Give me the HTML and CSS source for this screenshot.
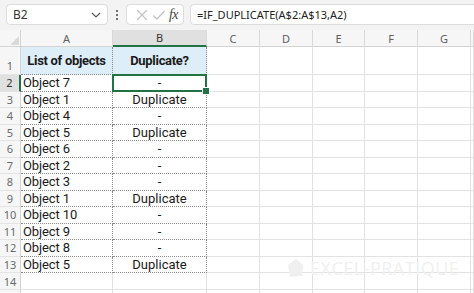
FILE: index.html
```html
<!DOCTYPE html>
<html>
<head>
<meta charset="utf-8">
<link rel="stylesheet" href="styles.css">
</head>
<body>
<div class="app">
  <div class="fbar">
    <div class="namebox"><span class="nb-text">B2</span>
      <svg class="chev" width="10" height="6" viewBox="0 0 10 6"><path d="M1 1 L5 5 L9 1" fill="none" stroke="#555" stroke-width="1.2"/></svg>
    </div>
    <div class="vdots"><span></span><span></span><span></span></div>
    <div class="actions">
      <svg width="14" height="14" viewBox="0 0 14 14"><path d="M2 2 L12 12 M12 2 L2 12" stroke="#c4c4c4" stroke-width="1.3" fill="none"/></svg>
      <svg width="14" height="14" viewBox="0 0 14 14"><path d="M1.5 7.5 L5 11 L12.5 3" stroke="#c4c4c4" stroke-width="1.3" fill="none"/></svg>
      <span class="fx">fx</span>
    </div>
    <div class="formula">=IF_DUPLICATE(A$2:A$13,A2)</div>
  </div>
  <div class="sheet">
    <div class="corner"><span class="tri"></span></div>
    <div class="ch">A</div><div class="ch sel">B</div><div class="ch">C</div><div class="ch">D</div><div class="ch">E</div><div class="ch">F</div><div class="ch">G</div><div class="ch"></div>

    <div class="rh rh1">1</div><div class="c hd">List of objects</div><div class="c hd">Duplicate?</div><div class="e"></div><div class="e"></div><div class="e"></div><div class="e"></div><div class="e"></div><div class="e"></div>

    <div class="rh sel">2</div><div class="c a">Object 7</div><div class="c b active">-</div><div class="e"></div><div class="e"></div><div class="e"></div><div class="e"></div><div class="e"></div><div class="e"></div>
    <div class="rh">3</div><div class="c a">Object 1</div><div class="c b">Duplicate</div><div class="e"></div><div class="e"></div><div class="e"></div><div class="e"></div><div class="e"></div><div class="e"></div>
    <div class="rh">4</div><div class="c a">Object 4</div><div class="c b">-</div><div class="e"></div><div class="e"></div><div class="e"></div><div class="e"></div><div class="e"></div><div class="e"></div>
    <div class="rh">5</div><div class="c a">Object 5</div><div class="c b">Duplicate</div><div class="e"></div><div class="e"></div><div class="e"></div><div class="e"></div><div class="e"></div><div class="e"></div>
    <div class="rh">6</div><div class="c a">Object 6</div><div class="c b">-</div><div class="e"></div><div class="e"></div><div class="e"></div><div class="e"></div><div class="e"></div><div class="e"></div>
    <div class="rh">7</div><div class="c a">Object 2</div><div class="c b">-</div><div class="e"></div><div class="e"></div><div class="e"></div><div class="e"></div><div class="e"></div><div class="e"></div>
    <div class="rh">8</div><div class="c a">Object 3</div><div class="c b">-</div><div class="e"></div><div class="e"></div><div class="e"></div><div class="e"></div><div class="e"></div><div class="e"></div>
    <div class="rh">9</div><div class="c a">Object 1</div><div class="c b">Duplicate</div><div class="e"></div><div class="e"></div><div class="e"></div><div class="e"></div><div class="e"></div><div class="e"></div>
    <div class="rh">10</div><div class="c a">Object 10</div><div class="c b">-</div><div class="e"></div><div class="e"></div><div class="e"></div><div class="e"></div><div class="e"></div><div class="e"></div>
    <div class="rh">11</div><div class="c a">Object 9</div><div class="c b">-</div><div class="e"></div><div class="e"></div><div class="e"></div><div class="e"></div><div class="e"></div><div class="e"></div>
    <div class="rh">12</div><div class="c a">Object 8</div><div class="c b">-</div><div class="e"></div><div class="e"></div><div class="e"></div><div class="e"></div><div class="e"></div><div class="e"></div>
    <div class="rh">13</div><div class="c a">Object 5</div><div class="c b">Duplicate</div><div class="e"></div><div class="e"></div><div class="e"></div><div class="e"></div><div class="e"></div><div class="e"></div>
    <div class="rh">14</div><div class="e"></div><div class="e"></div><div class="e"></div><div class="e"></div><div class="e"></div><div class="e"></div><div class="e"></div><div class="e"></div>
    <div class="rh"></div><div class="e"></div><div class="e"></div><div class="e"></div><div class="e"></div><div class="e"></div><div class="e"></div><div class="e"></div><div class="e"></div>
  </div>
  <div class="watermark">
    <svg width="22" height="22" viewBox="0 0 22 22"><path d="M4 8 L12 2 L19 8 L18 19 L6 20 Z" fill="#f0f0f0"/></svg>
    <span>EXCEL-PRATIQUE</span>
  </div>
</div>
</body>
</html>
```

FILE: styles.css
```css
* { box-sizing: border-box; }
html, body { margin: 0; padding: 0; background: #ffffff; }
body { width: 474px; height: 293px; overflow: hidden; }
.app { position: relative; width: 474px; height: 293px; overflow: hidden; font-family: "Roboto", "Liberation Sans", sans-serif; }

.fbar { height: 30px; background: #f3f3f3; display: flex; align-items: flex-start; padding-top: 4px; padding-left: 6px; font-family: "Noto Sans", "Open Sans", sans-serif; }
.namebox { width: 102px; height: 21px; background: #fff; border: 1px solid #dcdcdc; border-radius: 4px; display: flex; align-items: center; justify-content: space-between; padding: 0 6px 0 6px; font-size: 12px; color: #333; }
.vdots { width: 18px; height: 21px; display: flex; flex-direction: column; align-items: center; justify-content: center; gap: 2px; }
.vdots span { width: 2px; height: 2px; background: #444; border-radius: 1px; }
.actions { width: 58px; height: 21px; background: #fff; border: 1px solid #dcdcdc; border-radius: 4px; display: flex; align-items: center; justify-content: space-between; padding: 0 5px 0 8px; }
.fx { font-family: "Liberation Serif", serif; font-style: italic; font-size: 14px; color: #444; letter-spacing: -0.5px; }
.formula { flex: 1; height: 21px; margin-left: 6px; margin-right: -4px; background: #fff; border: 1px solid #dcdcdc; border-radius: 4px; padding-left: 6px; font-size: 11px; color: #222; line-height: 19px; }

.sheet { display: grid; grid-template-columns: 21px 92px 94px 53px 53px 52px 53px 53px 1fr; grid-template-rows: 17px 28px repeat(12, 16.5px) 17px 17px; }
.sheet > div { border-right: 1px solid #e2e2e2; border-bottom: 1px solid #e2e2e2; }
.corner { background: #f6f6f6; position: relative; border-color: #d4d4d4 !important; }
.tri { position: absolute; right: 1px; bottom: 1px; width: 0; height: 0; border-left: 9px solid transparent; border-bottom: 9px solid #d9d9d9; }
.ch { background: #f6f6f6; color: #5f5f5f; font-family: "Noto Sans", "Open Sans", sans-serif; font-size: 11px; display: flex; align-items: center; justify-content: center; border-right-color: #d9d9d9 !important; border-bottom-color: #d4d4d4 !important; }
.ch.sel { background: #e0e0e0; border-bottom: 2px solid #217346 !important; color: #333; }
.rh { background: #f6f6f6; color: #6a6a6a; font-family: "Noto Sans", "Open Sans", sans-serif; font-size: 11px; display: flex; align-items: center; justify-content: center; border-right-color: #d4d4d4 !important; border-bottom-color: #e4e4e4 !important; }
.rh1 { align-items: flex-end; padding-bottom: 1px; }
.rh.sel { background: #e0e0e0; border-right: 2px solid #217346 !important; color: #333; }

.c { font-size: 13px; color: #1a1a1a; display: flex; align-items: center; border-right: 1px dotted #8c8c8c !important; border-bottom: 1px dotted #8c8c8c !important; }
.c.a { padding-left: 2px; letter-spacing: -0.1px; }
.c.b { justify-content: center; }
.c.hd { background: #ddeef8; font-weight: bold; justify-content: center; letter-spacing: -0.3px; }
.active { position: relative; }
.active::before { content: ""; position: absolute; left: -1px; top: -1px; right: -1px; bottom: -1px; border: 2px solid #217346; }
.active::after { content: ""; position: absolute; right: -4px; bottom: -4px; width: 6px; height: 6px; background: #217346; border: 1px solid #fff; }

.watermark { position: absolute; left: 284px; top: 256px; display: flex; align-items: center; gap: 4px; font-family: "Open Sans", sans-serif; font-size: 18px; color: #f0f0f0; letter-spacing: 0.5px; }
```
